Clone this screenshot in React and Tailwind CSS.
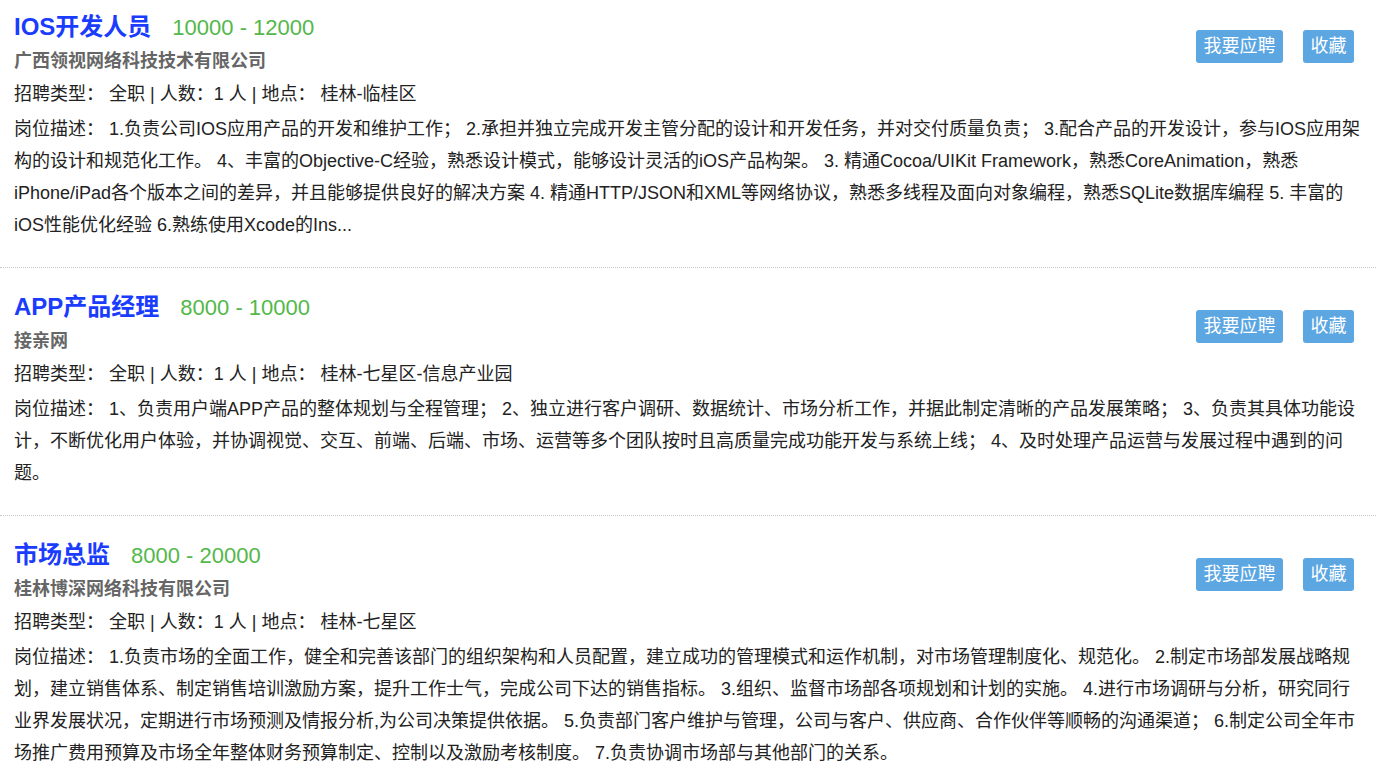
const jobs = [
  {
    title: 'IOS开发人员',
    salary: '10000 - 12000',
    company: '广西领视网络科技技术有限公司',
    type: '全职',
    count: '1',
    place: '桂林-临桂区',
    desc: '1.负责公司IOS应用产品的开发和维护工作； 2.承担并独立完成开发主管分配的设计和开发任务，并对交付质量负责； 3.配合产品的开发设计，参与IOS应用架构的设计和规范化工作。 4、丰富的Objective-C经验，熟悉设计模式，能够设计灵活的iOS产品构架。 3. 精通Cocoa/UIKit Framework，熟悉CoreAnimation，熟悉iPhone/iPad各个版本之间的差异，并且能够提供良好的解决方案 4. 精通HTTP/JSON和XML等网络协议，熟悉多线程及面向对象编程，熟悉SQLite数据库编程 5. 丰富的iOS性能优化经验 6.熟练使用Xcode的Ins...',
  },
  {
    title: 'APP产品经理',
    salary: '8000 - 10000',
    company: '接亲网',
    type: '全职',
    count: '1',
    place: '桂林-七星区-信息产业园',
    desc: '1、负责用户端APP产品的整体规划与全程管理； 2、独立进行客户调研、数据统计、市场分析工作，并据此制定清晰的产品发展策略； 3、负责其具体功能设计，不断优化用户体验，并协调视觉、交互、前端、后端、市场、运营等多个团队按时且高质量完成功能开发与系统上线； 4、及时处理产品运营与发展过程中遇到的问题。',
  },
  {
    title: '市场总监',
    salary: '8000 - 20000',
    company: '桂林博深网络科技有限公司',
    type: '全职',
    count: '1',
    place: '桂林-七星区',
    desc: '1.负责市场的全面工作，健全和完善该部门的组织架构和人员配置，建立成功的管理模式和运作机制，对市场管理制度化、规范化。 2.制定市场部发展战略规划，建立销售体系、制定销售培训激励方案，提升工作士气，完成公司下达的销售指标。 3.组织、监督市场部各项规划和计划的实施。 4.进行市场调研与分析，研究同行业界发展状况，定期进行市场预测及情报分析,为公司决策提供依据。 5.负责部门客户维护与管理，公司与客户、供应商、合作伙伴等顺畅的沟通渠道； 6.制定公司全年市场推广费用预算及市场全年整体财务预算制定、控制以及激励考核制度。 7.负责协调市场部与其他部门的关系。',
  },
];

function JobItem({ job, first }) {
  return (
    <div
      className={`border-b border-dotted border-[#c8c8c8] pl-[14px] pr-[14px] pb-[26px] ${
        first ? 'pt-[9px]' : 'pt-[21px]'
      }`}
    >
      <div className="flex items-start justify-between">
        <div>
          <div className="flex h-[36px] items-baseline">
            <span className="text-[24px] font-bold leading-[36px] text-[#1a3cfd]">{job.title}</span>
            <span className="ml-[21px] text-[22px] leading-[36px] text-[#52b84a]">{job.salary}</span>
          </div>
          <div className="text-[18px] font-bold leading-[32px] text-[#666666]">{job.company}</div>
        </div>
        <div className="mt-[21px] mr-[8px] flex">
          <button className="h-[33px] w-[87px] rounded-[3px] bg-[#5ca6e2] text-[18px] leading-[33px] text-white">
            我要应聘
          </button>
          <button className="ml-[20px] h-[33px] w-[51px] rounded-[3px] bg-[#5ca6e2] text-[18px] leading-[33px] text-white">
            收藏
          </button>
        </div>
      </div>
      <div className="mt-[1px] text-[18px] leading-[32px] text-[#222222]">
        招聘类型： 全职 | 人数：{job.count} 人 | 地点： {job.place}
      </div>
      <p className="mt-[3px] text-[18px] leading-[32px] text-[#222222]">岗位描述： {job.desc}</p>
    </div>
  );
}

export default function App() {
  return (
    <div
      className="h-[777px] w-[1376px] overflow-hidden bg-white"
      style={{ fontFamily: '"Liberation Sans", "Noto Sans CJK SC", sans-serif' }}
    >
      {jobs.map((job, i) => (
        <JobItem key={job.title} job={job} first={i === 0} />
      ))}
    </div>
  );
}
